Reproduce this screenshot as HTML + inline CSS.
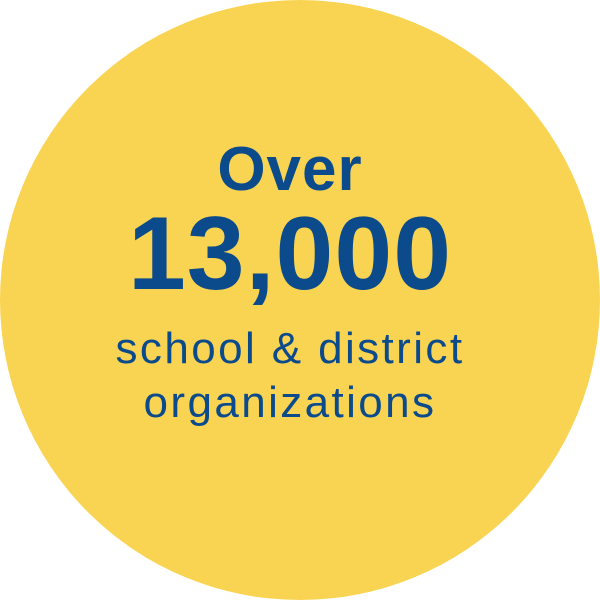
<!DOCTYPE html>
<html><head><style>
html,body{margin:0;padding:0;background:#fff;width:600px;height:600px;overflow:hidden}
.c{position:absolute;left:0;top:0;width:600px;height:600px;border-radius:50%;background:#F9D452}
.t{position:absolute;left:0;width:580px;text-align:center;color:#0B4A8B;font-family:"Liberation Sans",sans-serif;white-space:nowrap}
</style></head><body>
<div class="c"></div>
<div class="t" style="top:134px;font-size:62px;font-weight:bold;line-height:72px;letter-spacing:1px">Over</div>
<div class="t" style="top:199px;font-size:104px;font-weight:bold;line-height:110px;letter-spacing:1px">13,000</div>
<div class="t" style="top:322px;font-size:44px;line-height:54px;letter-spacing:2.4px">school &amp; district<br>organizations</div>
</body></html>
